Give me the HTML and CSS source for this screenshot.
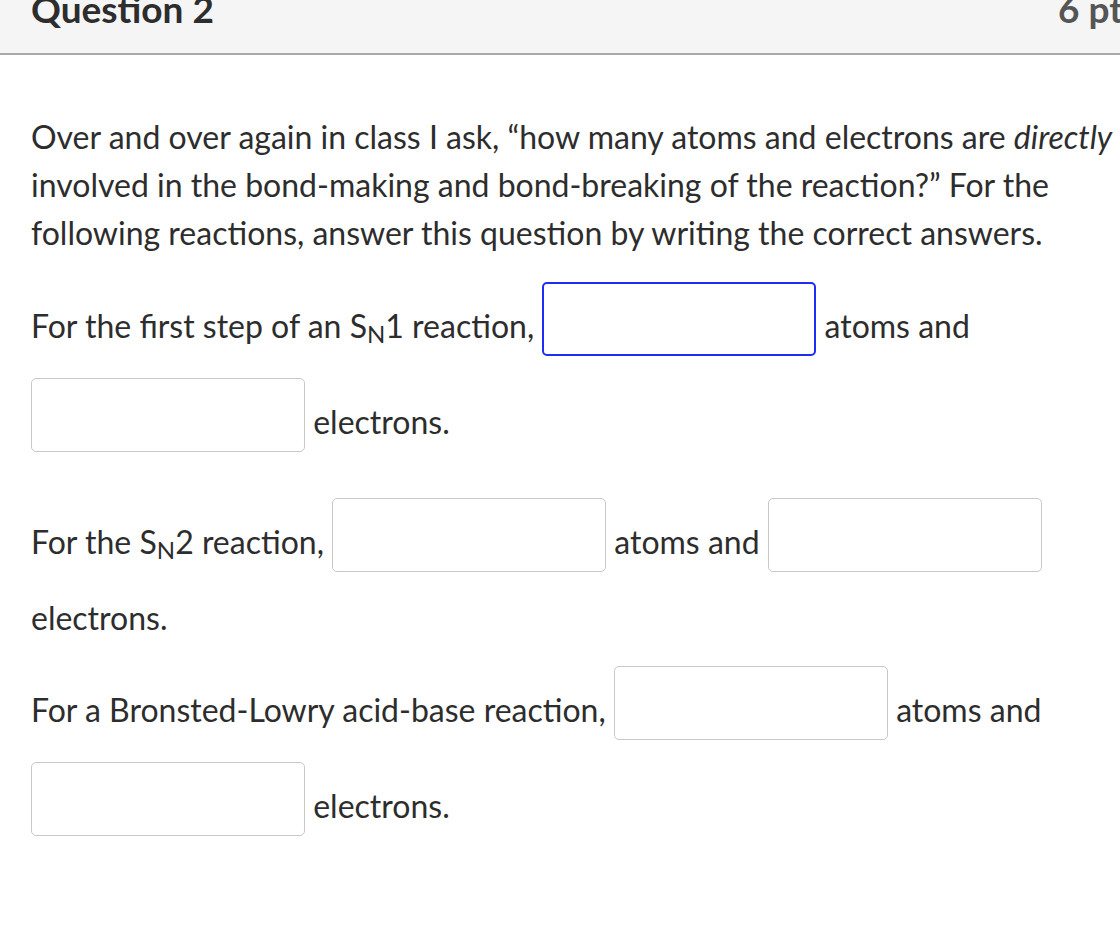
FILE: index.html
```
<!DOCTYPE html>
<html lang="en">
<head>
<meta charset="utf-8">
<title>Question 2</title>
<link rel="stylesheet" href="styles.css">
</head>
<body>
<div class="page">
  <header class="qheader">
    <h2 class="qtitle">Question 2</h2>
    <span class="qpts">6 pt</span>
  </header>
  <div class="qtext">
    <p class="intro">Over and over again in class I ask, “how many atoms and electrons are <em>directly</em> involved in the bond-making and bond-breaking of the reaction?” For the following reactions, answer this question by writing the correct answers.</p>
    <p class="blank-line">For the first step of an S<sub>N</sub>1 reaction, <input class="ans ans-focus" type="text" aria-label="atoms"> atoms and <input class="ans" type="text" aria-label="electrons"> electrons.</p>
    <p class="blank-line">For the S<sub>N</sub>2 reaction, <input class="ans" type="text" aria-label="atoms"> atoms and <input class="ans" type="text" aria-label="electrons"> electrons.</p>
    <p class="blank-line">For a Bronsted-Lowry acid-base reaction, <input class="ans" type="text" aria-label="atoms"> atoms and <input class="ans" type="text" aria-label="electrons"> electrons.</p>
  </div>
</div>
</body>
</html>
```
FILE: styles.css
```
html, body {
  margin: 0;
  padding: 0;
  background: #ffffff;
  overflow: hidden;
}
.page {
  width: 1172px;
  font-family: Lato, "Open Sans", sans-serif;
  color: #2d2d2d;
}
.qheader {
  height: 53px;
  background: #f5f5f5;
  border-bottom: 2px solid #aaaaaa;
  display: flex;
  justify-content: space-between;
  align-items: flex-start;
  padding: 0 49px 0 31px;
  overflow: hidden;
}
.qtitle {
  margin: -11px 0 0 0;
  font-size: 37px;
  font-weight: 700;
  line-height: 40px;
  color: #2d2d2d;
}
.qpts {
  margin-top: -11px;
  font-size: 37px;
  font-weight: 700;
  line-height: 40px;
  color: #555555;
}
.qtext {
  padding: 58px 31px 0 31px;
  width: 1110px;
  font-size: 32px;
  line-height: 48px;
}
.qtext p {
  margin: 0 0 24px 0;
}
.qtext p.intro {
  margin-bottom: 25px;
}
.qtext sub {
  font-size: 0.75em;
  line-height: 0;
  vertical-align: -0.2em;
}
.ans {
  box-sizing: border-box;
  width: 274px;
  height: 74px;
  margin: 0 0 22px 0;
  padding: 0 8px;
  border: 1px solid #c8c8c8;
  border-radius: 5px;
  background: #ffffff;
  vertical-align: middle;
  font: inherit;
}
.ans-focus {
  border: 2px solid #1f2cf5;
}
```
